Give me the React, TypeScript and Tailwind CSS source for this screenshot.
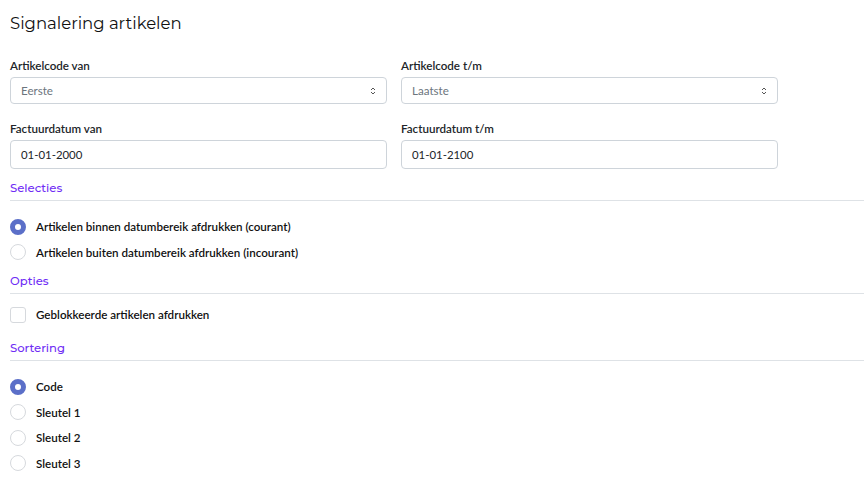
import React, { useState } from 'react';

const heading = "font-['Montserrat','Lato','Noto_Sans',sans-serif]";

const SelectField = ({ label, value }: { label: string; value: string }) => (
  <div>
    <label className="block text-[11.6px] font-semibold text-[#212529] leading-[16px] mb-[3px]">{label}</label>
    <div className="flex items-center justify-between h-[27px] border border-[#ced4da] rounded-[4px] px-[10px] bg-white">
      <span className="text-[11.6px] text-[#6c757d]">{value}</span>
      <svg width="6" height="8" viewBox="0 0 6 8" className="text-[#555]">
        <path d="M1 3 L3 1 L5 3 M1 5 L3 7 L5 5" fill="none" stroke="currentColor" strokeWidth="1" />
      </svg>
    </div>
  </div>
);

const DateField = ({ label, value }: { label: string; value: string }) => (
  <div>
    <label className="block text-[11.6px] font-semibold text-[#212529] leading-[16px] mb-[3px]">{label}</label>
    <div className="flex items-center h-[29px] border border-[#ced4da] rounded-[4px] px-[10px] bg-white">
      <span className="text-[11.4px] text-[#212529]">{value}</span>
    </div>
  </div>
);

const Section = ({ title }: { title: string }) => (
  <div className="border-b border-[#dee2e6] pb-[4px]">
    <h3 className={`${heading} text-[11.6px] font-medium text-[#6f2cf5] leading-[16px]`}>{title}</h3>
  </div>
);

const Radio = ({ checked, label, onClick }: { checked: boolean; label: string; onClick: () => void }) => (
  <div className="flex items-center h-[25.5px] cursor-pointer" onClick={onClick}>
    {checked ? (
      <span className="w-[16px] h-[16px] rounded-full border-[5px] border-[#5b6fc8] bg-white" />
    ) : (
      <span className="w-[16px] h-[16px] rounded-full border border-[#d6d9dd] bg-white" />
    )}
    <span className="ml-[10px] text-[11.6px] font-semibold text-[#111]">{label}</span>
  </div>
);

export default function App() {
  const [selectie, setSelectie] = useState(0);
  const [sortering, setSortering] = useState(0);
  const [geblokkeerd, setGeblokkeerd] = useState(false);

  const selecties = [
    'Artikelen binnen datumbereik afdrukken (courant)',
    'Artikelen buiten datumbereik afdrukken (incourant)',
  ];
  const sorteringen = ['Code', 'Sleutel 1', 'Sleutel 2', 'Sleutel 3'];

  return (
    <div className="min-h-screen bg-white pl-[10px] font-['Lato','Noto_Sans',sans-serif]">
      <h1 className={`${heading} text-[16.5px] text-[#111] pt-[12px] leading-[22px]`}>Signalering artikelen</h1>

      <div className="grid grid-cols-2 gap-x-[14px] gap-y-[17px] w-[768px] mt-[24px]">
        <SelectField label="Artikelcode van" value="Eerste" />
        <SelectField label="Artikelcode t/m" value="Laatste" />
        <DateField label="Factuurdatum van" value="01-01-2000" />
        <DateField label="Factuurdatum t/m" value="01-01-2100" />
      </div>

      <div className="mt-[11px]">
        <Section title="Selecties" />
        <div className="pt-[13px]">
          {selecties.map((s, i) => (
            <Radio key={s} label={s} checked={selectie === i} onClick={() => setSelectie(i)} />
          ))}
        </div>
      </div>

      <div className="mt-[8px]">
        <Section title="Opties" />
        <div className="flex items-center h-[25px] mt-[8px] cursor-pointer" onClick={() => setGeblokkeerd(!geblokkeerd)}>
          <span className="w-[16px] h-[16px] rounded-[3px] border border-[#d6d9dd] bg-white" />
          <span className="ml-[10px] text-[11.6px] font-semibold text-[#111]">Geblokkeerde artikelen afdrukken</span>
        </div>
      </div>

      <div className="mt-[13px]">
        <Section title="Sortering" />
        <div className="pt-[13px]">
          {sorteringen.map((s, i) => (
            <Radio key={s} label={s} checked={sortering === i} onClick={() => setSortering(i)} />
          ))}
        </div>
      </div>
    </div>
  );
}
